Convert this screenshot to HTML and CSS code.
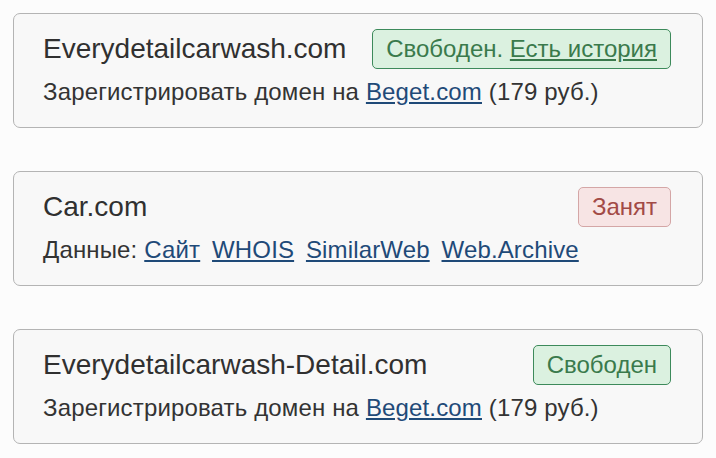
FILE: index.html
```html
<!DOCTYPE html>
<html lang="ru">
<head>
  <meta charset="UTF-8">
  <meta name="viewport" content="width=device-width, initial-scale=1.0">
  <title>Проверка доменов</title>
  <link rel="stylesheet" href="styles.css">
</head>
<body>
  <div class="list">
    <div class="card">
      <div class="card-head">
        <span class="domain">Everydetailcarwash.com</span>
        <span class="badge free">Свободен. <a href="#">Есть история</a></span>
      </div>
      <p class="info">Зарегистрировать домен на <a href="#">Beget.com</a> (179 руб.)</p>
    </div>

    <div class="card">
      <div class="card-head">
        <span class="domain">Car.com</span>
        <span class="badge busy">Занят</span>
      </div>
      <p class="info links">Данные: <a href="#">Сайт</a> <a href="#">WHOIS</a> <a href="#">SimilarWeb</a> <a href="#">Web.Archive</a></p>
    </div>

    <div class="card">
      <div class="card-head">
        <span class="domain">Everydetailcarwash-Detail.com</span>
        <span class="badge free">Свободен</span>
      </div>
      <p class="info">Зарегистрировать домен на <a href="#">Beget.com</a> (179 руб.)</p>
    </div>
  </div>
</body>
</html>
```

FILE: styles.css
```css
body { font-family: "Liberation Sans", Arial, sans-serif; background: #fcfcfc; color: #333; margin: 0; }
.list { padding: 13px 13px 0 13px; display: flex; flex-direction: column; gap: 43px; }
.card { background: #f8f8f8; border: 1px solid #b4b4b4; border-radius: 7px; padding: 15px 31px 21px 29px; }
.card-head { display: flex; justify-content: space-between; align-items: center; height: 40px; }
.domain { font-size: 28px; color: #303030; }
.badge { font-size: 24px; line-height: 38px; padding: 0 13px; border-radius: 5px; border: 1px solid; }
.badge a { color: inherit; }
.free { background: #dbf1e0; border-color: #3d8a5b; color: #3a7a4c; }
.busy { background: #f7e4e4; border-color: #d4a6a6; color: #a24a46; }
.info { font-size: 24px; line-height: 28px; margin: 9px 0 0 0; letter-spacing: 0.15px; }
.info a { color: #1f4a78; text-underline-offset: 2px; }
.links a { margin-right: 5px; }
```
